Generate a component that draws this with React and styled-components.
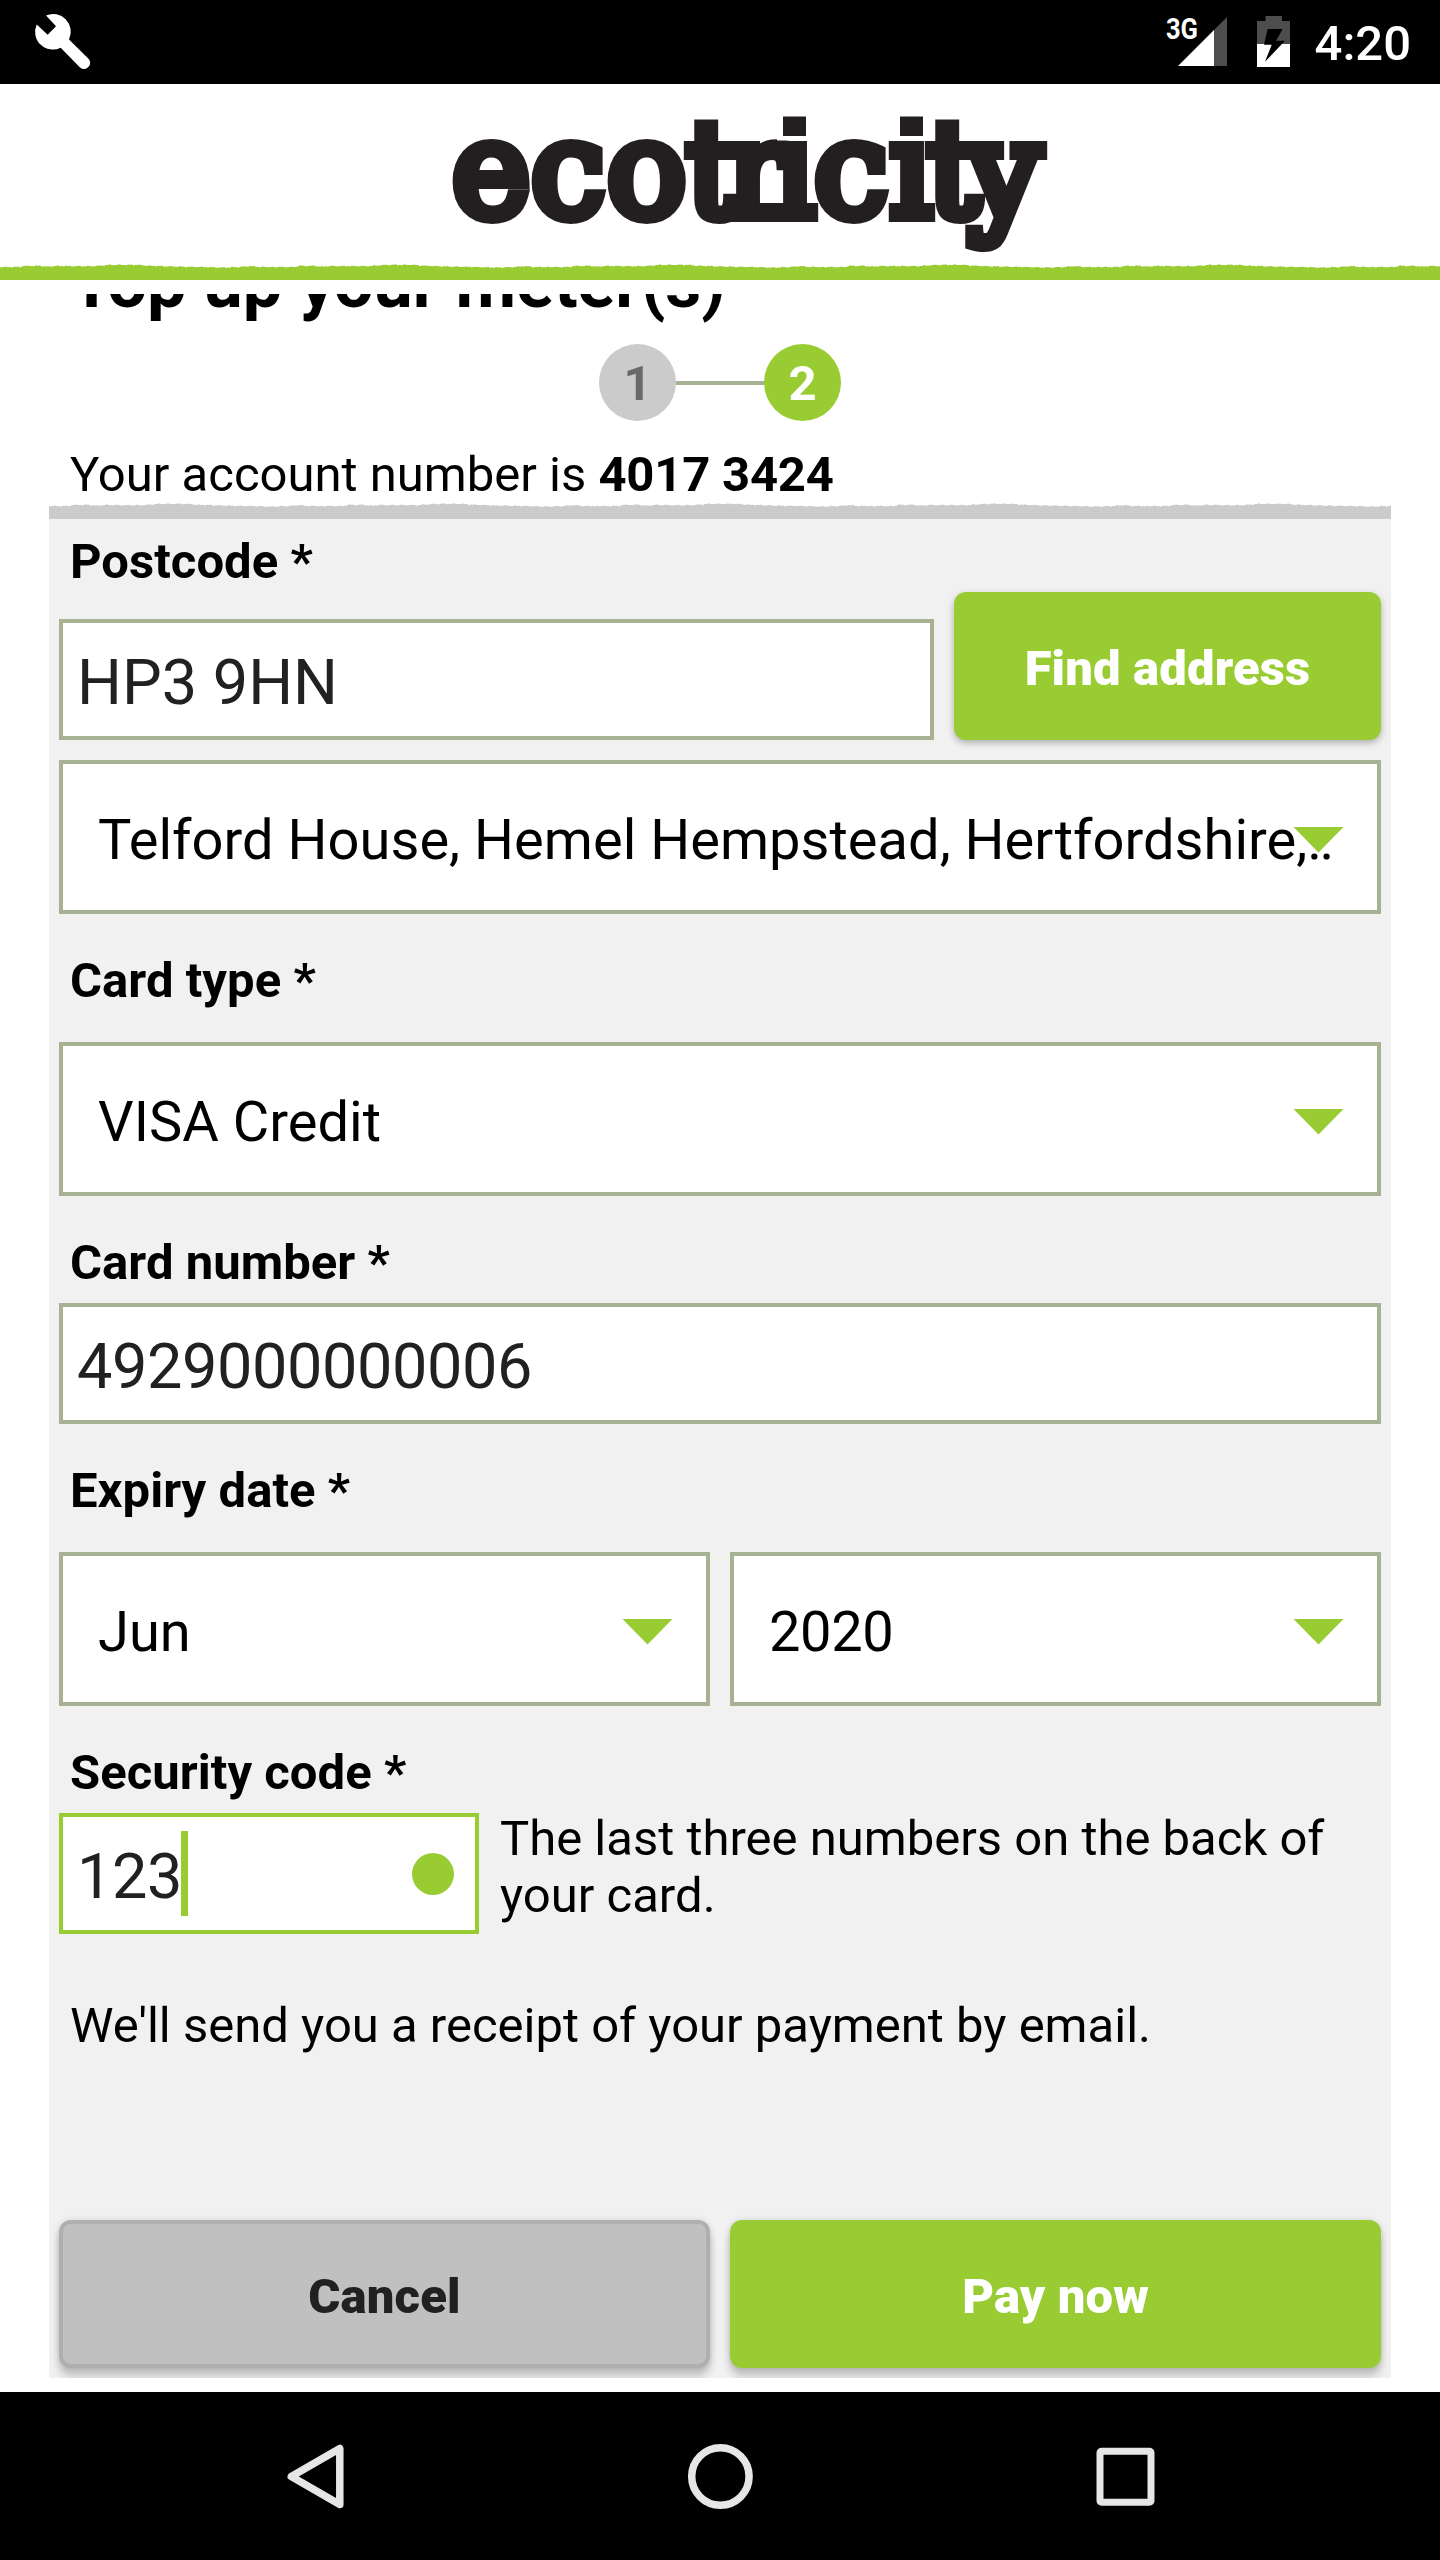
import React from "react";
import styled, { createGlobalStyle } from "styled-components";

const GREEN = "#99cc33";
const SAGE = "#a7b292";
const INK = "#231f20";

const GlobalStyle = createGlobalStyle`
  * { box-sizing: border-box; }
  html, body { margin: 0; padding: 0; background: #fff; }
  body { font-family: Roboto, "Liberation Sans", sans-serif; color: #000; }
`;

const Screen = styled.div`
  width: 1440px;
  height: 2560px;
  display: flex;
  flex-direction: column;
  background: #fff;
  overflow: hidden;
`;

const StatusBar = styled.div`
  height: 84px;
  flex: none;
  display: flex;
  align-items: flex-start;
  justify-content: space-between;
  background: #000;
  padding-right: 29px;
`;

const StatusRight = styled.div`
  display: flex;
  align-items: flex-start;
`;

const Clock = styled.span`
  color: #fff;
  font-size: 49px;
  font-weight: 500;
  line-height: 57px;
  margin: 15px 0 0 23px;
`;

const Header = styled.header`
  height: 196px;
  flex: none;
  display: flex;
  flex-direction: column;
  justify-content: space-between;
`;

const LogoBox = styled.div`
  display: flex;
  height: 180px;
`;

const TornStrip = styled.svg`
  display: block;
  flex: none;
  width: 100%;
  height: 16px;
`;

const Scroll = styled.main`
  margin-top: 14px;
  height: 2098px;
  flex: none;
  overflow: hidden;
  padding: 0 49px;
  display: flex;
  flex-direction: column;
`;

const Title = styled.h1`
  margin: -52px 0 0;
  padding-left: 21px;
  font-size: 70px;
  line-height: 82px;
  font-weight: 700;
  letter-spacing: -0.05px;
  flex: none;
`;

const Steps = styled.div`
  margin-top: 20px;
  height: 77px;
  flex: none;
  display: flex;
  justify-content: center;
  align-items: center;
`;

const Step = styled.div`
  width: 77px;
  height: 77px;
  border-radius: 50%;
  display: flex;
  align-items: center;
  justify-content: center;
  font-size: 49px;
  font-weight: 700;
  line-height: 57px;
  padding-top: 2px;
  background: ${(p) => (p.$active ? GREEN : "#cbcbcb")};
  color: ${(p) => (p.$active ? "#fff" : "#696969")};
`;

const StepLine = styled.div`
  width: 88px;
  height: 4px;
  background: ${SAGE};
`;

const Account = styled.p`
  margin: 25px 0 0;
  padding-left: 21px;
  font-size: 49px;
  line-height: 57px;
  flex: none;

  b {
    letter-spacing: -0.2px;
  }
`;

const Panel = styled.section`
  height: 1859px;
  flex: none;
  background: #f1f1f1;
  padding: 0 10px;
  overflow: hidden;
  display: flex;
  flex-direction: column;
`;

const Label = styled.label`
  display: block;
  flex: none;
  height: 57px;
  font-size: 49px;
  line-height: 57px;
  font-weight: 700;
  padding-left: 11px;
  letter-spacing: 0.04px;
  margin: ${(p) => p.$top ?? 38}px 0 ${(p) => p.$gap ?? 33}px;
`;

const Row = styled.div`
  display: flex;
  flex: none;
  gap: 20px;
  margin-top: ${(p) => p.$top ?? 0}px;
  align-items: ${(p) => p.$align || "stretch"};
`;

const Field = styled.div`
  height: 121px;
  flex: ${(p) => (p.$width ? "none" : "1")};
  width: ${(p) => (p.$width ? p.$width + "px" : "auto")};
  border: 4px solid ${(p) => (p.$focus ? GREEN : SAGE)};
  background: #fff;
  color: #212121;
  font-size: 63px;
  line-height: 74px;
  letter-spacing: ${(p) => (p.$digits ? "-0.4px" : "normal")};
  padding: 23px 21px 0 14px;
  display: flex;
  justify-content: space-between;
`;

const Caret = styled.span`
  display: inline-block;
  width: 7px;
  height: 85px;
  margin: -9px 0 0 -1px;
  vertical-align: top;
  background: ${GREEN};
`;

const Dot = styled.span`
  width: 42px;
  height: 42px;
  border-radius: 50%;
  margin-top: 13px;
  background: ${GREEN};
`;

const SelectBox = styled.div`
  position: relative;
  height: 154px;
  flex: 1;
  border: 4px solid ${SAGE};
  background: #fff;
  font-size: 56px;
  line-height: 66px;
  letter-spacing: ${(p) => (p.$digits ? "-0.4px" : "0.03px")};
  padding: 43px 0 0 35px;
  white-space: nowrap;
`;

const Arrow = styled.svg`
  position: absolute;
  right: 33px;
  top: 62px;
  width: 51px;
  height: 27px;
`;

const Leader = styled.span`
  letter-spacing: -2.5px;
`;

const Button = styled.button`
  height: 148px;
  flex: none;
  width: ${(p) => p.$width}px;
  border: ${(p) => (p.$grey ? "4px solid #afafaf" : "0")};
  border-radius: 12px;
  background: ${(p) => (p.$grey ? "#c0c0c0" : GREEN)};
  color: ${(p) => (p.$grey ? "#212121" : "#fff")};
  font: 900 49px/57px Roboto, "Liberation Sans", sans-serif;
  letter-spacing: 0.15px;
  padding: 4px 0 0;
  box-shadow: ${(p) =>
    p.$raised
      ? "0 8px 8px rgba(0,0,0,0.2), 0 0 6px rgba(0,0,0,0.12)"
      : "0 3px 7px rgba(0,0,0,0.28)"};
`;

const Hint = styled.p`
  margin: -3px 0 0 1px;
  flex: 1;
  font-size: 49px;
  line-height: 57px;
`;

const Receipt = styled.p`
  margin: 63px 0 166px;
  padding-left: 11px;
  font-size: 49px;
  line-height: 57px;
  flex: none;
`;

const NavBar = styled.nav`
  height: 168px;
  flex: none;
  background: #000;
  display: flex;
  align-items: center;
  justify-content: center;
  gap: 325px;
`;

const NavIcon = styled.svg`
  width: 80px;
  height: 80px;
  fill: none;
  stroke: #e6e6e6;
  stroke-width: 7.5;
`;

/* Top profile of one 275px torn-paper tile. */
const PROFILE = [
  [0, 3], [20, 3], [23, 1.9], [40, 1.8], [47, 2.8], [54, 1.9], [75, 2.1],
  [92, 2.2], [101, 1.6], [110, 0.9], [138, 0.8], [146, 1.6], [172, 2.5],
  [200, 3], [222, 3.6], [240, 3], [250, 2.1], [260, 3], [275, 3],
];

function profileAt(x) {
  const u = x % 275;
  const i = PROFILE.findIndex((p) => p[0] > u);
  const [x0, y0] = PROFILE[i - 1];
  const [x1, y1] = PROFILE[i];
  return y0 + ((y1 - y0) * (u - x0)) / (x1 - x0);
}

function tornPath(width) {
  let d = "M0 16";
  for (let x = 0; x <= width; x += 2) {
    const u = x % 275;
    const jitter = Math.sin(u * 1.7) * 0.35 + Math.sin(u * 0.61 + 1) * 0.35;
    d += `L${x} ${(profileAt(x) + jitter).toFixed(2)}`;
  }
  return d + `L${width} 16Z`;
}

function Torn({ width, color }) {
  return (
    <TornStrip viewBox={`0 0 ${width} 16`} preserveAspectRatio="none">
      <path d={tornPath(width)} fill={color} />
    </TornStrip>
  );
}

/* Slab wordmark: heavily outlined serif text, with square dots on both i's. */
function Logo() {
  return (
    <svg width="1440" height="180" viewBox="0 84 1440 180" role="img" aria-label="ecotricity">
      <clipPath id="dotless">
        <path
          clipRule="evenodd"
          d="M0 84H1440V264H0ZM777 84H812V140.5H777ZM894 84H929V140.5H894Z"
        />
      </clipPath>
      <text
        x="452 531 607 686 726 773 814 890 927 967"
        y="216"
        clipPath="url(#dotless)"
        fontFamily='"DejaVu Serif", serif'
        fontWeight="400"
        fontSize="132"
        fill={INK}
        stroke={INK}
        strokeWidth="12"
        strokeLinejoin="miter"
      >
        ecotricity
      </text>
      <rect x="783" y="116.5" width="23" height="19.5" fill={INK} />
      <rect x="900" y="116.5" width="23" height="19.5" fill={INK} />
    </svg>
  );
}

function Select({ children, digits }) {
  return (
    <SelectBox $digits={digits}>
      {children}
      <Arrow viewBox="0 0 51 27">
        <path d="M0.5 1H50.5L25.5 26.5Z" fill={GREEN} />
      </Arrow>
    </SelectBox>
  );
}

export default function App() {
  return (
    <>
      <GlobalStyle />
      <Screen>
        <StatusBar>
          <svg width="120" height="84">
            <path
              fill="#fff"
              d="M46 15.5L56 26.3L47.7 34.7L36.7 24.5A17.7 17.7 0 0 0 60.7 47.7L80 67.5A6.2 6.2 0 0 0 89 59.2L69 39.5A17.7 17.7 0 0 0 46 15.5Z"
            />
          </svg>
          <StatusRight>
            <svg width="130" height="84" viewBox="1162 0 130 84">
              <text
                x="1166"
                y="38.7"
                fill="#fff"
                fontFamily="Roboto, sans-serif"
                fontSize="29.5"
                fontWeight="700"
                textLength="32"
                lengthAdjust="spacingAndGlyphs"
              >
                3G
              </text>
              <path d="M1214 30L1227 17V66H1214Z" fill="#4d4d4d" />
              <path d="M1178 66L1214 30V66Z" fill="#fff" />
              <path d="M1265.5 16H1282V21H1290V44H1257V21H1265.5Z" fill="#4d4d4d" />
              <path d="M1257 44H1290V67H1257Z" fill="#fff" />
              <path
                d="M1267.7 29H1282.7L1276 40.8H1285L1265 61.7L1271.7 44.7H1264Z"
                fill="#000"
              />
            </svg>
            <Clock>4:20</Clock>
          </StatusRight>
        </StatusBar>

        <Header>
          <LogoBox>
            <Logo />
          </LogoBox>
          <Torn width={1440} color={GREEN} />
        </Header>

        <Scroll>
          <Title>Top up your meter(s)</Title>
          <Steps>
            <Step>1</Step>
            <StepLine />
            <Step $active>2</Step>
          </Steps>
          <Account>
            Your account number is <b>4017 3424</b>
          </Account>
          <Torn width={1342} color="#cbcbcb" />
          <Panel>
            <Label $top={14} $gap={2}>Postcode *</Label>
            <Row $align="flex-end">
              <Field>HP3 9HN</Field>
              <Button $width={427}>Find address</Button>
            </Row>
            <Row $top={20}>
              <Select>
                Telford House, Hemel Hempstead, Hertfordshire,<Leader>..</Leader>
              </Select>
            </Row>
            <Label>Card type *</Label>
            <Row>
              <Select>VISA Credit</Select>
            </Row>
            <Label $gap={12}>Card number *</Label>
            <Row>
              <Field $digits>4929000000006</Field>
            </Row>
            <Label>Expiry date *</Label>
            <Row>
              <Select>Jun</Select>
              <Select digits>2020</Select>
            </Row>
            <Label $gap={12}>Security code *</Label>
            <Row>
              <Field $width={420} $focus $digits>
                <span>
                  123
                  <Caret />
                </span>
                <Dot />
              </Field>
              <Hint>The last three numbers on the back of your card.</Hint>
            </Row>
            <Receipt>We'll send you a receipt of your payment by email.</Receipt>
            <Row>
              <Button $width={651} $grey $raised>Cancel</Button>
              <Button $width={651} $raised>Pay now</Button>
            </Row>
          </Panel>
        </Scroll>

        <NavBar>
          <NavIcon viewBox="0 0 80 80">
            <path d="M16.3 40.5L64.8 12.5V68.5Z" strokeLinejoin="round" />
          </NavIcon>
          <NavIcon viewBox="0 0 80 80">
            <circle cx="40.4" cy="40.5" r="28.7" />
          </NavIcon>
          <NavIcon viewBox="0 0 80 80">
            <rect x="15" y="15.3" width="51" height="51" rx="1.5" strokeWidth="7" />
          </NavIcon>
        </NavBar>
      </Screen>
    </>
  );
}
